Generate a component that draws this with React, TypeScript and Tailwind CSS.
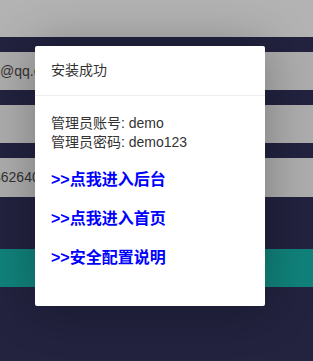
import React from 'react';

const FONT = { fontFamily: '"Liberation Sans", Arial, "Noto Sans CJK SC", sans-serif' };

export default function App() {
  return (
    <div className="relative w-[313px] h-[361px] overflow-hidden bg-[#23223f]" style={FONT}>
      {/* background page (dimmed) */}
      <div className="flex flex-col">
        <div className="h-[37px] bg-[#b3b3b3]" />
        <div className="h-[15px]" />
        <div className="h-[38px] bg-[#adadad] flex items-center text-[14px] text-[#333]">
          <span>@qq.com</span>
        </div>
        <div className="h-[15px]" />
        <div className="h-[38px] bg-[#adadad]" />
        <div className="h-[15px]" />
        <div className="h-[39px] bg-[#adadad] flex items-center text-[14px] text-[#333]">
          <span className="-ml-[7px]">362640</span>
        </div>
        <div className="h-[52px]" />
        <div className="h-[38px] bg-[#10827a]" />
      </div>

      {/* layer dialog */}
      <div className="absolute left-[35px] top-[46px] w-[230px] h-[260px] bg-white rounded-[2px] shadow-[0_0_50px_rgba(0,0,0,0.3)]">
        <div className="h-[50px] flex items-center px-[16px] border-b border-[#eee] text-[14px] text-[#333]">
          安装成功
        </div>
        <div className="px-[16px] pt-[18px]">
          <div className="text-[14px] leading-[19px] text-[#333]">
            <p>管理员账号: demo</p>
            <p>管理员密码: demo123</p>
          </div>
          <div className="mt-[16px] flex flex-col gap-[15px] text-[16px] leading-[24px] font-bold text-[#0000ff]">
            <a>&gt;&gt;点我进入后台</a>
            <a>&gt;&gt;点我进入首页</a>
            <a>&gt;&gt;安全配置说明</a>
          </div>
        </div>
      </div>
    </div>
  );
}
